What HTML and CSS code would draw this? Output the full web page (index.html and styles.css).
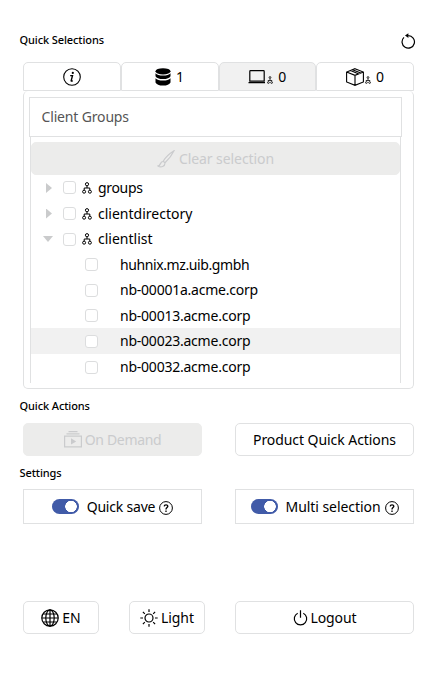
FILE: index.html
```html
<!DOCTYPE html>
<html lang="en">
<head>
<meta charset="utf-8">
<title>Quick Panel</title>
<link rel="stylesheet" href="styles.css">
</head>
<body>
<svg class="defs" width="0" height="0">
  <symbol id="org" viewBox="0 0 10 12"><g fill="none" stroke="currentColor"><circle cx="5" cy="2.2" r="1.6"/><path d="M5 4v2M2.200 8V6h5.600v2"/><circle cx="2.1" cy="9.7" r="1.5"/><circle cx="7.9" cy="9.7" r="1.5"/></g></symbol>
  <symbol id="org-mini" viewBox="0 0 6 8"><g fill="none" stroke="currentColor" stroke-width=".8"><circle cx="3" cy="1.500" r=".9"/><path d="M3 2.500v1.500M.8 4.500h4.400"/><circle cx="1.400" cy="6.500" r=".9"/><circle cx="4.600" cy="6.500" r=".9"/></g></symbol>
  <symbol id="help" viewBox="0 0 14 14"><g fill="none" stroke="currentColor"><circle cx="7" cy="7" r="6.4"/><path d="M5.2 5.4C5.3 3.3 8.9 3.4 8.8 5.4 8.7 6.6 7 6.6 7 8.4M7 9.6v1.3" stroke-width="1.3"/></g></symbol>
</svg>
<main>
  <header class="head"><h2>Quick Selections</h2>
    <svg class="refresh" width="15" height="16" viewBox="0 0 15 16"><path d="M3 4.400A6.200 6.200 0 1 0 7.200 2.700" fill="none" stroke="currentColor" stroke-width="1.200"/><path d="M4 2.600 7.400.200v4.800z" fill="currentColor"/></svg>
  </header>
  <nav class="tabs">
    <div class="tab"><svg width="18" height="18" viewBox="0 0 18 18"><circle cx="9" cy="9" r="8.3" fill="none" stroke="currentColor" stroke-width="1.1"/><circle cx="9.8" cy="4.9" r="1.1" fill="currentColor"/><path d="M7.2 7.6h2.3L8.2 12.7q-.1.9 1.5 0" fill="none" stroke="currentColor" stroke-width="1.4"/></svg></div>
    <div class="tab"><svg width="16" height="18" viewBox="0 0 16 18"><g fill="currentColor"><ellipse cx="8" cy="3.3" rx="7.5" ry="3.1"/><path d="M.5 5.200q2 2.300 7.500 2.300t7.500-2.300v3Q14 11 8 11T.5 8.200zM.5 10.200q2 2.300 7.500 2.300t7.500-2.300v4.300Q14 17.600 8 17.600T.5 14.500z"/></g></svg><span class="num">1</span></div>
    <div class="tab active"><svg width="18" height="14" viewBox="0 0 18 14"><path d="M2.500.700h13a.7.700 0 0 1 .7.700v9.800H1.800V1.400a.7.700 0 0 1 .7-.7zM.500 12.700h16.500" fill="none" stroke="currentColor" stroke-width="1.200"/></svg><svg class="mini" width="6" height="8"><use href="#org-mini"/></svg><span class="num">0</span></div>
    <div class="tab"><svg width="18" height="18" viewBox="0 0 18 18"><path d="M9 .700 17.400 4v10L9 17.300.600 14V4zM.600 4 9 7.300 17.400 4M9 7.300v10M4.500 2.500l8.300 3.400M6.500 1.700l8.300 3.300" fill="none" stroke="currentColor" stroke-width="1.100"/></svg><svg class="mini" width="6" height="8"><use href="#org-mini"/></svg><span class="num">0</span></div>
  </nav>
  <section class="panel">
    <div class="title"><span>Client Groups</span></div>
    <div class="tree">
      <div class="btn disabled clear"><svg width="18" height="18" viewBox="0 0 18 18"><path d="M17 .800C12 4 8 8 6.200 11.300l1.800 1.500C11 10 15 5 17 .800zM6 11.500c-3 0-2 4-5 4.500 3 2 7 .500 7-3" fill="none" stroke="currentColor" stroke-width="1.200"/></svg><span>Clear selection</span></div>
      <div class="row"><i class="arrow"></i><i class="check"></i><svg class="org" width="10" height="12"><use href="#org"/></svg><span class="tight">groups</span></div>
      <div class="row"><i class="arrow"></i><i class="check"></i><svg class="org" width="10" height="12"><use href="#org"/></svg><span>clientdirectory</span></div>
      <div class="row"><i class="arrow open"></i><i class="check"></i><svg class="org" width="10" height="12"><use href="#org"/></svg><span>clientlist</span></div>
      <div class="row leaf"><i class="check"></i><span class="tighter">huhnix.mz.uib.gmbh</span></div>
      <div class="row leaf"><i class="check"></i><span>nb-00001a.acme.corp</span></div>
      <div class="row leaf"><i class="check"></i><span>nb-00013.acme.corp</span></div>
      <div class="row leaf hover"><i class="check"></i><span>nb-00023.acme.corp</span></div>
      <div class="row leaf"><i class="check"></i><span>nb-00032.acme.corp</span></div>
    </div>
  </section>
  <h2 class="actions-title">Quick Actions</h2>
  <div class="pair actions">
    <div class="btn disabled"><svg width="18" height="17" viewBox="0 0 18 17"><path d="M.600 5.100h16.800v10.800H.600zM2.500 2.800h13M4.500.700h9" fill="none" stroke="currentColor" stroke-width="1.200"/><path d="M7 7.300v6.200l5.200-3.100z" fill="currentColor"/></svg><span class="tight">On Demand</span></div>
    <div class="btn"><span class="product">Product Quick Actions</span></div>
  </div>
  <h2 class="settings-title">Settings</h2>
  <div class="pair settings">
    <div class="setting"><i class="toggle"></i><span class="save">Quick save</span><svg class="help" width="14" height="14"><use href="#help"/></svg></div>
    <div class="setting"><i class="toggle"></i><span class="multi">Multi selection</span><svg class="help" width="14" height="14"><use href="#help"/></svg></div>
  </div>
  <footer class="foot">
    <div class="btn"><svg width="18" height="18" viewBox="0 0 18 18"><g fill="none" stroke="currentColor" stroke-width="1.200"><circle cx="9" cy="9" r="8.200"/><ellipse cx="9" cy="9" rx="4.200" ry="8.200"/><path d="M9 .800v16.400M.800 9h16.400M2.200 5h13.600M2.200 13h13.600"/></g></svg><span>EN</span></div>
    <div class="btn"><svg width="18" height="18" viewBox="0 0 18 18"><g fill="none" stroke="currentColor" stroke-width="1.200"><circle cx="9" cy="9" r="4"/><path d="M9 .300v2.700M9 15v2.700M.300 9H3M15 9h2.700M2.900 2.900l1.900 1.900M13.200 13.200l1.900 1.900M15.100 2.900l-1.900 1.900M4.800 13.200l-1.900 1.900"/></g></svg><span class="light">Light</span></div>
    <div class="btn"><svg width="15" height="16" viewBox="0 0 15 16"><path d="M4.700 3.200a6.200 6.200 0 1 0 5.600 0M7.500.300v7.500" fill="none" stroke="currentColor" stroke-width="1.200"/></svg><span class="logout">Logout</span></div>
  </footer>
</main>
</body>
</html>
```
FILE: styles.css
```css
* { box-sizing: border-box; }
body { margin: 0; background: #fff; color: #000; font: 14px/20px "Noto Sans", "Open Sans", sans-serif; white-space: nowrap; }
main { width: 436px; height: 684px; padding: 30px 22px 0 23px; overflow: hidden; }
svg { display: block; flex: none; }
.defs { position: absolute; }
h2 { margin: 0 0 0 -3.5px; font-size: 11px; line-height: 20px; font-weight: 500; letter-spacing: -.1px; }
.head { display: flex; justify-content: space-between; height: 32px; }
.refresh { margin: 3px -1.5px 0 0; }
.tabs { display: grid; grid-template-columns: repeat(4, 1fr); height: 29px; }
.tab { display: flex; align-items: center; justify-content: center; border: 1px solid #e0e1e2; border-radius: 5px 5px 0 0; }
.tab.active { background: #f1f1f1; }
.num { margin-left: 5px; }
.mini { margin: 6px 0 0 1px; }
.panel { height: 298px; padding: 6px 11px 0 5px; border: 1px solid #e0e1e2; border-top: 0; border-radius: 5px; }
.title { display: flex; align-items: center; width: 373px; height: 40px; padding-left: 11.5px; border: 1px solid #e0e1e2; color: #555; letter-spacing: -.16px; }
.tree { width: 371px; height: 246px; margin-left: 1px; padding-top: 5px; border: solid #e0e1e2; border-width: 0 1px; }
.btn { display: flex; align-items: center; justify-content: center; height: 33px; border: 1px solid #e0e1e2; border-radius: 5px; gap: 3px; }
.clear { margin-bottom: -.4px; gap: 4px; letter-spacing: -.08px; }
.disabled { background: #ececeb; border-color: #ececeb; color: #cacbcd; }
.row { display: flex; align-items: center; height: 25.6px; padding: 1px 0 0 14px; }
.row.leaf { padding-left: 54px; letter-spacing: -.23px; }
.row .tighter { letter-spacing: -.4px; }
.tight { letter-spacing: -.32px; }
.hover { background: #f1f1f1; }
.arrow { width: 6px; height: 10px; margin: 0 14px 0 1px; background: #cacbcc; clip-path: polygon(0 0, 100% 50%, 0 100%); }
.arrow.open { width: 10px; height: 6px; margin: 0 13px 0 -2px; clip-path: polygon(0 0, 100% 0, 50% 100%); }
.check { width: 13px; height: 13px; border: 1px solid #dcddde; border-radius: 3px; background: #fff; }
.row .check { margin-right: 6px; margin-left: -3px; }
.row.leaf .check { margin: 0 22px 0 0; }
.org { margin-right: 6px; }
.actions-title { margin-top: 7px; }
.pair { display: grid; grid-template-columns: 179px 179px; justify-content: space-between; }
.actions { margin-top: 7px; }
.product, .multi { letter-spacing: -.06px; }
.save { letter-spacing: -.2px; }
.light, .logout { letter-spacing: -.1px; }
.settings-title { margin-top: 7px; }
.settings { margin-top: 6px; }
.setting { display: flex; align-items: center; justify-content: center; height: 35px; border: 1px solid #e0e1e2; }
.toggle { width: 27px; height: 15px; margin-right: 8px; border-radius: 8px; background: radial-gradient(circle at 19px 7.5px, #fff 5.5px, #415ba8 6px); }
.help { margin: 2px 0 0 4px; }
.foot { display: grid; grid-template-columns: 76px 76px 179px; justify-content: space-between; margin-top: 77px; }
```
